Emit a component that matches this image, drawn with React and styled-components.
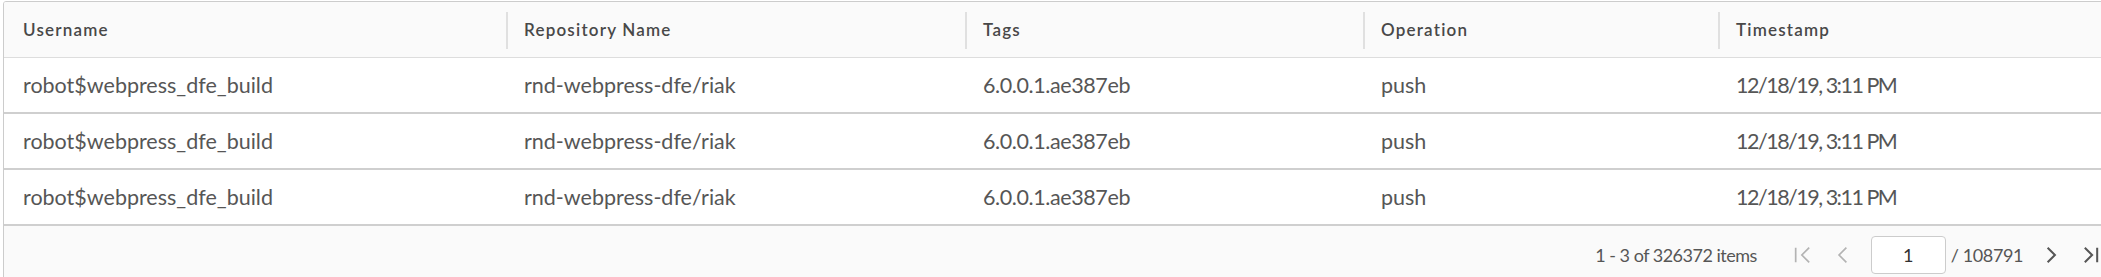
import styled, { createGlobalStyle } from "styled-components";

const columns = ["Username", "Repository Name", "Tags", "Operation", "Timestamp"];

const rows = [
  ["robot$webpress_dfe_build", "rnd-webpress-dfe/riak", "6.0.0.1.ae387eb", "push", "12/18/19, 3:11 PM"],
  ["robot$webpress_dfe_build", "rnd-webpress-dfe/riak", "6.0.0.1.ae387eb", "push", "12/18/19, 3:11 PM"],
  ["robot$webpress_dfe_build", "rnd-webpress-dfe/riak", "6.0.0.1.ae387eb", "push", "12/18/19, 3:11 PM"],
];

// tighter tracking for the columns that are mostly digits
const spacing = [0, 0, -0.4, 0, -1.5];

export default function App() {
  return (
    <>
      <GlobalStyle />
      <Grid>
        <HeaderRow>
          {columns.map((c, i) => (
            <HeaderCell key={c} $divider={i > 0}>
              {c}
            </HeaderCell>
          ))}
        </HeaderRow>
        {rows.map((r, i) => (
          <Row key={i}>
            {r.map((v, j) => (
              <Cell key={j} $first={j === 0} $tracking={spacing[j]}>
                {v}
              </Cell>
            ))}
          </Row>
        ))}
        <Footer>
          <ItemCount>1 - 3 of 326372 items</ItemCount>
          <Pager>
            <PageButton $disabled aria-label="first page">
              <svg width="18" height="18" viewBox="0 0 16 16">
                <path d="M1.5 1.5v13M13.5 1.5L7 8l6.5 6.5" fill="none" stroke="currentColor" strokeWidth="1.5" />
              </svg>
            </PageButton>
            <PageButton $disabled aria-label="previous page">
              <svg width="18" height="18" viewBox="0 0 16 16">
                <path d="M11 1.5L4.5 8l6.5 6.5" fill="none" stroke="currentColor" strokeWidth="1.5" />
              </svg>
            </PageButton>
            <PageInput defaultValue="1" />
            <PageTotal>/ 108791</PageTotal>
            <PageButton aria-label="next page">
              <svg width="18" height="18" viewBox="0 0 16 16">
                <path d="M5 1.5L11.5 8 5 14.5" fill="none" stroke="currentColor" strokeWidth="1.8" />
              </svg>
            </PageButton>
            <PageButton aria-label="last page">
              <svg width="18" height="18" viewBox="0 0 16 16">
                <path d="M2.5 1.5L9 8l-6.5 6.5M13.5 1.5v13" fill="none" stroke="currentColor" strokeWidth="1.8" />
              </svg>
            </PageButton>
          </Pager>
        </Footer>
      </Grid>
    </>
  );
}

const GlobalStyle = createGlobalStyle`
  body {
    margin: 0;
    background: #fff;
    overflow: hidden;
    font-family: "Lato", "Liberation Sans", sans-serif;
  }
`;

const cols = "502px 459px 398px 355px 1fr";

const Grid = styled.div`
  margin: 1px 0 0 3px;
  width: 2120px;
  border: 1px solid #cccccc;
  border-radius: 3px;
  overflow: hidden;
`;

const HeaderRow = styled.div`
  display: grid;
  grid-template-columns: ${cols};
  height: 55px;
  background: #fafafa;
  border-bottom: 1px solid #dddddd;
`;

const HeaderCell = styled.div`
  position: relative;
  display: flex;
  align-items: center;
  padding-left: ${(p) => (p.$divider ? "18px" : "19px")};
  font-size: 17px;
  font-weight: 600;
  letter-spacing: 1.2px;
  color: #484848;

  &::before {
    content: "";
    display: ${(p) => (p.$divider ? "block" : "none")};
    position: absolute;
    left: 0;
    top: 10px;
    bottom: 8px;
    width: 2px;
    background: #e0e0e0;
  }
`;

const Row = styled.div`
  display: grid;
  grid-template-columns: ${cols};
  height: 54px;
  border-bottom: 2px solid #cfcfcf;
`;

const Cell = styled.div`
  display: flex;
  align-items: center;
  padding-left: ${(p) => (p.$first ? "19px" : "18px")};
  font-size: 21.5px;
  letter-spacing: ${(p) => p.$tracking}px;
  color: #565656;
  white-space: nowrap;
`;

const Footer = styled.div`
  display: flex;
  align-items: center;
  justify-content: flex-end;
  height: 58px;
  padding-right: 13px;
  background: #fafafa;
`;

const ItemCount = styled.span`
  font-size: 18px;
  letter-spacing: -0.5px;
  color: #565656;
  margin-right: 26px;
`;

const Pager = styled.div`
  display: flex;
  align-items: center;
`;

const PageButton = styled.button`
  display: flex;
  align-items: center;
  justify-content: center;
  width: 40px;
  height: 32px;
  padding: 0;
  border: none;
  background: none;
  color: ${(p) => (p.$disabled ? "#b3b3b3" : "#565656")};
  cursor: ${(p) => (p.$disabled ? "default" : "pointer")};
`;

const PageInput = styled.input`
  box-sizing: border-box;
  width: 75px;
  height: 38px;
  margin-left: 8px;
  border: 1.5px solid #cccccc;
  border-radius: 4px;
  background: #fff;
  text-align: center;
  font-family: inherit;
  font-size: 18px;
  color: #313131;
  outline: none;
`;

const PageTotal = styled.span`
  margin: 0 8px 0 5px;
  font-size: 18px;
  letter-spacing: -0.4px;
  color: #565656;
  white-space: nowrap;
`;
